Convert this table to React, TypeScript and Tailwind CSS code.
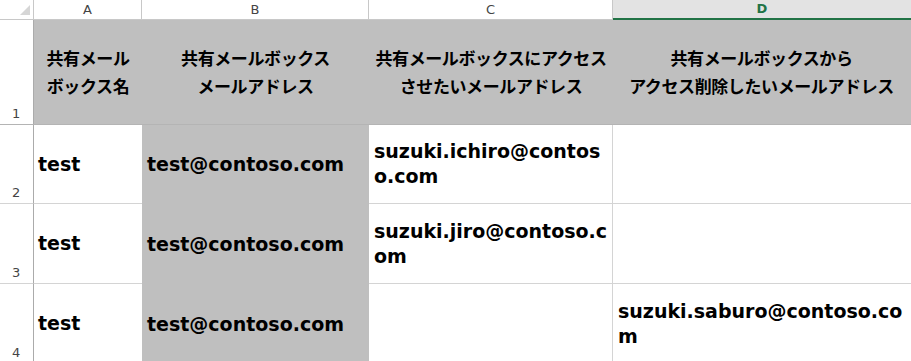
const dataFont = "font-['DejaVu_Sans','Noto_Sans_CJK_JP',sans-serif]";

type Row = {
  num: number;
  a: string;
  b: string;
  c: string[];
  d: string[];
  height: string;
};

const rows: Row[] = [
  { num: 2, a: "test", b: "test@contoso.com", c: ["suzuki.ichiro@contos", "o.com"], d: [], height: "h-[79px]" },
  { num: 3, a: "test", b: "test@contoso.com", c: ["suzuki.jiro@contoso.c", "om"], d: [], height: "h-[80px]" },
  { num: 4, a: "test", b: "test@contoso.com", c: [], d: ["suzuki.saburo@contoso.co", "m"], height: "h-[80px]" },
];

function Lines({ lines }: { lines: string[] }) {
  return (
    <div className="whitespace-nowrap">
      {lines.map((l, i) => (
        <div key={i}>{l}</div>
      ))}
    </div>
  );
}

export default function App() {
  return (
    <div className="w-[911px] h-[361px] overflow-hidden bg-white text-black select-none">
      {/* column letters */}
      <div className="flex h-[20px] font-['DejaVu_Sans',sans-serif] text-[13px] text-[#444]">
        <div className="relative w-[34px] shrink-0 border-r border-b border-[#c8c8c8]">
          <svg className="absolute left-[19px] top-[4px]" width="12" height="12" viewBox="0 0 12 12">
            <polygon points="11,1 11,11 1,11" fill="#d6d6d6" />
          </svg>
        </div>
        <div className="w-[108px] shrink-0 flex items-center justify-center border-r border-b border-[#c8c8c8]">A</div>
        <div className="w-[227px] shrink-0 flex items-center justify-center border-r border-b border-[#c8c8c8]">B</div>
        <div className="w-[244px] shrink-0 flex items-center justify-center border-r border-b border-[#c8c8c8]">C</div>
        <div className="w-[298px] shrink-0 flex items-center justify-center bg-[#e3e3e3] border-b-2 border-[#217346] text-[#217346] font-bold">
          D
        </div>
      </div>

      {/* header row */}
      <div className="flex h-[105px] border-b border-[#b4b4b4]">
        <div className="w-[34px] shrink-0 flex items-end pl-[12px] pb-[1px] border-r border-[#ababab] font-['DejaVu_Sans',sans-serif] text-[13px] text-[#444]">
          1
        </div>
        <div className="flex flex-1 bg-[#bfbfbf] font-['Noto_Sans_CJK_JP',sans-serif] font-bold text-[17px] leading-[28px] tracking-[-0.4px] text-center">
          <div className="w-[108px] shrink-0 flex items-center justify-center">
            <div>
              共有メール
              <br />
              ボックス名
            </div>
          </div>
          <div className="w-[227px] shrink-0 flex items-center justify-center">
            <div>
              共有メールボックス
              <br />
              メールアドレス
            </div>
          </div>
          <div className="w-[244px] shrink-0 flex items-center justify-center">
            <div>
              共有メールボックスにアクセス
              <br />
              させたいメールアドレス
            </div>
          </div>
          <div className="w-[297px] shrink-0 flex items-center justify-center">
            <div>
              共有メールボックスから
              <br />
              アクセス削除したいメールアドレス
            </div>
          </div>
        </div>
      </div>

      {/* data rows */}
      {rows.map((r) => (
        <div key={r.num} className={`flex ${r.height}`}>
          <div className="w-[34px] shrink-0 flex items-end pl-[12px] pb-[1px] border-r border-b border-r-[#ababab] border-b-[#d4d4d4] font-['DejaVu_Sans',sans-serif] text-[13px] text-[#444]">
            {r.num}
          </div>
          <div className={`w-[108px] shrink-0 flex items-center pl-[4px] border-b border-[#d4d4d4] ${dataFont} font-bold text-[19px] leading-[25px]`}>
            {r.a}
          </div>
          <div className={`w-[227px] shrink-0 flex items-center pl-[5px] bg-[#bfbfbf] ${dataFont} font-bold text-[19px] leading-[25px]`}>
            {r.b}
          </div>
          <div className={`w-[244px] shrink-0 flex items-center pl-[5px] border-r border-b border-[#d4d4d4] ${dataFont} font-bold text-[19px] leading-[25px]`}>
            <Lines lines={r.c} />
          </div>
          <div className={`w-[298px] shrink-0 flex items-center pl-[5px] border-b border-[#d4d4d4] ${dataFont} font-bold text-[19px] leading-[25px]`}>
            <Lines lines={r.d} />
          </div>
        </div>
      ))}
    </div>
  );
}
